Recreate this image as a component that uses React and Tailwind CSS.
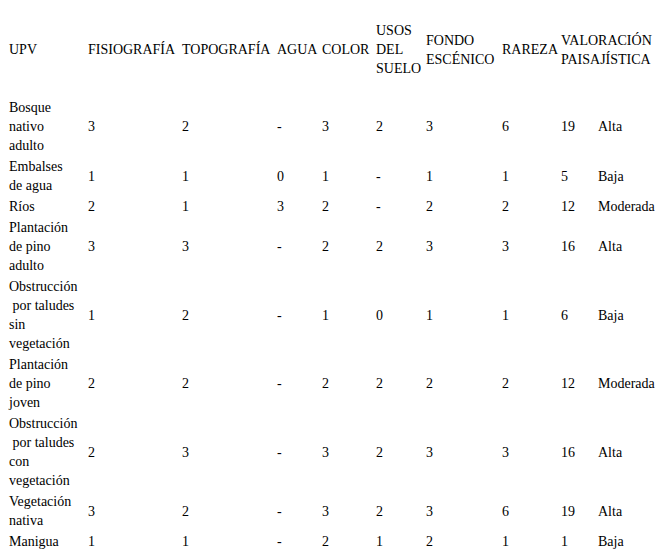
import React from 'react';

const rows = [
  { upv: ['Bosque', 'nativo', 'adulto'], v: ['3', '2', '-', '3', '2', '3', '6', '19', 'Alta'] },
  { upv: ['Embalses', 'de agua'], v: ['1', '1', '0', '1', '-', '1', '1', '5', 'Baja'] },
  { upv: ['Ríos'], v: ['2', '1', '3', '2', '-', '2', '2', '12', 'Moderada'] },
  { upv: ['Plantación', 'de pino', 'adulto'], v: ['3', '3', '-', '2', '2', '3', '3', '16', 'Alta'] },
  { upv: ['Obstrucción', '\u00a0por taludes', 'sin', 'vegetación'], v: ['1', '2', '-', '1', '0', '1', '1', '6', 'Baja'] },
  { upv: ['Plantación', 'de pino', 'joven'], v: ['2', '2', '-', '2', '2', '2', '2', '12', 'Moderada'] },
  { upv: ['Obstrucción', '\u00a0por taludes', 'con', 'vegetación'], v: ['2', '3', '-', '3', '2', '3', '3', '16', 'Alta'] },
  { upv: ['Vegetación', 'nativa'], v: ['3', '2', '-', '3', '2', '3', '6', '19', 'Alta'] },
  { upv: ['Manigua'], v: ['1', '1', '-', '2', '1', '2', '1', '1', 'Baja'] },
];

const Lines = ({ items }) => (
  <>
    {items.map((t, i) => (
      <React.Fragment key={i}>
        {i > 0 && <br />}
        {t}
      </React.Fragment>
    ))}
  </>
);

const th = 'p-0 pt-px pb-[19px] text-left font-normal align-middle whitespace-nowrap';
const td = 'p-0 py-px text-left align-middle whitespace-nowrap';

export default function App() {
  return (
    <div className="w-[662px] h-[555px] bg-white overflow-hidden pt-[20px] pl-[9px] text-black text-[14px] leading-[19px] font-[Liberation_Serif,serif]">
      <table className="table-fixed border-collapse w-[647px]">
        <colgroup>
          <col className="w-[79px]" />
          <col className="w-[94px]" />
          <col className="w-[95px]" />
          <col className="w-[45px]" />
          <col className="w-[54px]" />
          <col className="w-[50px]" />
          <col className="w-[76px]" />
          <col className="w-[59px]" />
          <col className="w-[37px]" />
          <col className="w-[58px]" />
        </colgroup>
        <thead>
          <tr>
            <th className={th}>UPV</th>
            <th className={th}>FISIOGRAFÍA</th>
            <th className={th}>TOPOGRAFÍA</th>
            <th className={th}>AGUA</th>
            <th className={th}>COLOR</th>
            <th className={th}>
              <Lines items={['USOS', 'DEL', 'SUELO']} />
            </th>
            <th className={th}>
              <Lines items={['FONDO', 'ESCÉNICO']} />
            </th>
            <th className={th}>RAREZA</th>
            <th className={th} colSpan={2}>
              <Lines items={['VALORACIÓN', 'PAISAJÍSTICA']} />
            </th>
          </tr>
        </thead>
        <tbody>
          {rows.map((r, i) => (
            <tr key={i}>
              <td className={td}>
                <Lines items={r.upv} />
              </td>
              {r.v.map((val, j) => (
                <td key={j} className={td}>{val}</td>
              ))}
            </tr>
          ))}
        </tbody>
      </table>
    </div>
  );
}
